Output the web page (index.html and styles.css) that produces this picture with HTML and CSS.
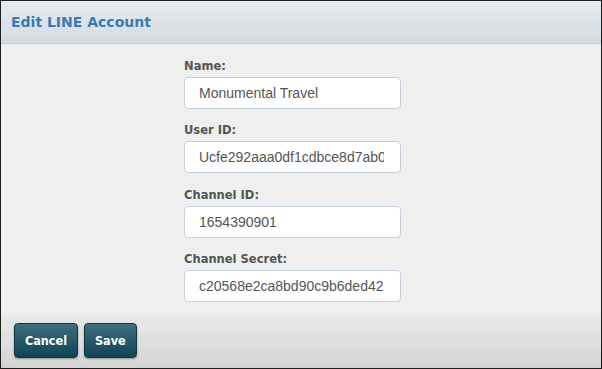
FILE: index.html
```html
<!DOCTYPE html>
<html lang="en">
<head>
    <meta charset="UTF-8">
    <meta name="viewport" content="width=device-width, initial-scale=1.0">
    <title>Edit LINE Account</title>
    <link rel="stylesheet" href="styles.css">
</head>
<body>
    <div class="dialog">
        <header class="dialog-header">
            <h1>Edit LINE Account</h1>
        </header>

        <div class="dialog-body">
            <div class="form-group">
                <label for="name">Name:</label>
                <input type="text" id="name" value="Monumental Travel">
            </div>
            <div class="form-group">
                <label for="userId">User ID:</label>
                <input type="text" id="userId" value="Ucfe292aaa0df1cdbce8d7ab0f5e3c21a">
            </div>
            <div class="form-group">
                <label for="channelId">Channel ID:</label>
                <input type="text" id="channelId" value="1654390901">
            </div>
            <div class="form-group">
                <label for="channelSecret">Channel Secret:</label>
                <input type="text" id="channelSecret" value="c20568e2ca8bd90c9b6ded42a1f7e0b3">
            </div>
        </div>

        <footer class="dialog-footer">
            <button class="btn">Cancel</button>
            <button class="btn">Save</button>
        </footer>
    </div>
</body>
</html>
```

FILE: styles.css
```css
:root {
    --title-blue: #3a7bb2;
    --label-gray: #555;
    --input-border: #c3d1de;
    --body-bg: #efefef;
}
* {
    box-sizing: border-box;
}
body {
    margin: 0;
    font-family: "Liberation Sans", Arial, sans-serif;
}
.dialog {
    width: 602px;
    height: 369px;
    border: 1px solid #1e1e1e;
    background: var(--body-bg);
    display: flex;
    flex-direction: column;
}
.dialog-header {
    height: 43px;
    flex-shrink: 0;
    background: linear-gradient(#e7ecf0, #d2dbe1);
    border-bottom: 1px solid #c3ccd3;
    display: flex;
    align-items: center;
    padding-left: 10px;
}
.dialog-header h1 {
    margin: 0;
    font-family: "DejaVu Sans", Verdana, sans-serif;
    font-size: 14px;
    font-weight: 700;
    color: var(--title-blue);
}
.dialog-body {
    flex: 1;
    padding: 10.5px 0 0 183px;
}
.form-group {
    display: flex;
    flex-direction: column;
    margin-bottom: 10.67px;
}
label {
    font-family: "DejaVu Sans Condensed", "DejaVu Sans", Verdana, sans-serif;
    font-size: 12.8px;
    font-weight: 700;
    color: var(--label-gray);
    line-height: 18px;
    padding-top: 2px;
    margin-bottom: 2px;
}
input {
    width: 217px;
    height: 32px;
    padding: 0 16px 0 14px;
    border: 1px solid var(--input-border);
    border-radius: 4px;
    background: #fff;
    font-family: "Liberation Sans", Arial, sans-serif;
    font-size: 14px;
    color: #555;
}
.dialog-footer {
    height: 55px;
    flex-shrink: 0;
    background: linear-gradient(#ebebeb, #d3d3d3);
    display: flex;
    align-items: center;
    gap: 6px;
    padding-left: 13px;
}
.btn {
    height: 35px;
    padding: 0 10px;
    border: 1px solid #0d3441;
    border-radius: 4px;
    background: linear-gradient(#3f6e7d, #0e4454);
    box-shadow: 0 1px 2px rgba(0, 0, 0, 0.35);
    color: #fff;
    font-family: "DejaVu Sans Condensed", "DejaVu Sans", Verdana, sans-serif;
    font-size: 12.5px;
    font-weight: 700;
}
```
